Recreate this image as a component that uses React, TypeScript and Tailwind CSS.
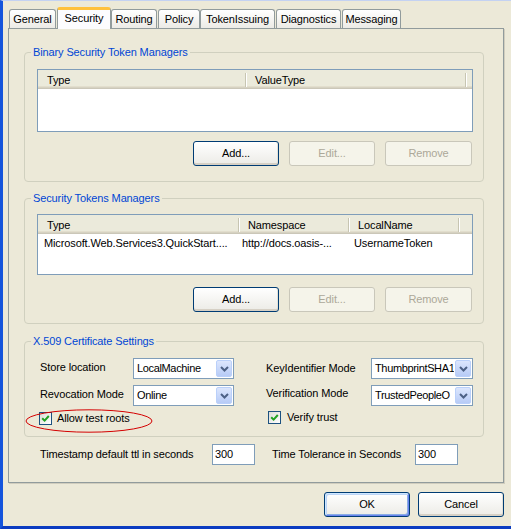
import React from "react";

function Chevron() {
  return (
    <svg width="9" height="6" viewBox="0 0 9 6">
      <polyline points="1,1 4.5,4.5 8,1" fill="none" stroke="#4D6185" strokeWidth="2" />
    </svg>
  );
}

function Select({ value, w }: { value: string; w: string }) {
  return (
    <div className={`${w} h-[21px] border border-[#7F9DB9] bg-white flex items-stretch`}>
      <div className="flex-1 min-w-0 pl-[3px] flex items-center overflow-hidden whitespace-nowrap tracking-[-0.35px]">{value}</div>
      <div className="w-[16px] shrink-0 m-px rounded-[2px] border border-[#BAD0FA] bg-linear-to-b from-[#DCE6FD] to-[#B7CBF6] flex items-center justify-center">
        <Chevron />
      </div>
    </div>
  );
}

function Checkbox() {
  return (
    <div className="w-[13px] h-[13px] border border-[#1C5180] bg-linear-to-br from-[#DCDCD7] to-white flex items-center justify-center">
      <svg width="9" height="9" viewBox="0 0 9 9">
        <path d="M1.2 4.2 L3.6 6.6 L7.8 2" fill="none" stroke="#21A121" strokeWidth="2" />
      </svg>
    </div>
  );
}

function Btn({ label, w, disabled, def }: { label: string; w: string; disabled?: boolean; def?: boolean }) {
  if (disabled) {
    return (
      <div className={`${w} h-[25px] rounded-[3px] border border-[#C9C7BA] bg-[#F5F4EA] text-[#ACA899] flex items-center justify-center`}>
        {label}
      </div>
    );
  }
  if (def) {
    return (
      <div className={`${w} h-[25px] rounded-[3px] border border-[#003C74] bg-linear-to-b from-white to-[#ECEBE6] flex items-center justify-center shadow-[inset_1px_1px_0_#CEE7FF,inset_-1px_-1px_0_#6982EE,inset_2px_2px_0_#BCD4F6,inset_-2px_-2px_0_#89ADE4]`}>
        {label}
      </div>
    );
  }
  return (
    <div className={`${w} h-[25px] rounded-[3px] border border-[#003C74] bg-linear-to-b from-white to-[#ECEBE6] flex items-center justify-center shadow-[inset_0_-2px_0_#D6D0C5,inset_-1px_0_0_#E3E1D6]`}>
      {label}
    </div>
  );
}

function HeaderCell({ label, w }: { label: string; w: string }) {
  return (
    <div className={`${w} h-full flex items-center justify-between pl-[9px] pt-[2px]`}>
      <span className="whitespace-nowrap">{label}</span>
      <span className="w-px h-[14px] -mt-[2px] bg-[#C7C5B2] shadow-[1px_0_0_#FFFFFF]" />
    </div>
  );
}

const headerCls =
  "h-[19px] flex bg-[#EBEADB] shadow-[inset_0_-1px_0_#CBC7B8,inset_0_-2px_0_#D6D2C2,inset_0_-3px_0_#E2DECD]";

function GroupTitle({ text }: { text: string }) {
  return (
    <div className="-mt-[7px] ml-[6px] px-[2px] w-fit bg-[#ECE9D8] text-[#0046D5] leading-[13px] whitespace-nowrap">
      {text}
    </div>
  );
}

function Tab({ label, w, ml, selected }: { label: string; w: string; ml: string; selected?: boolean }) {
  if (selected) {
    return (
      <div className={`${w} ${ml} h-[22px] -mb-px relative z-10 border-x border-[#919B9C] border-t-[3px] border-t-[#FFC13C] rounded-t-[3px] bg-[#FCFCFE] flex items-center justify-center pb-[2px]`}>
        {label}
      </div>
    );
  }
  return (
    <div className={`${w} ${ml} h-[19px] border border-b-0 border-[#919B9C] rounded-t-[3px] bg-linear-to-b from-white to-[#ECEBE6] flex items-center justify-center pt-[1px]`}>
      {label}
    </div>
  );
}

export default function App() {
  return (
    <div className="relative w-[511px] h-[529px] overflow-hidden bg-[#ECE9D8] border-t border-t-[#C4D2F2] border-l-[3px] border-l-[#1454DC] border-b-[3px] border-b-[#0B3CC1] font-['Liberation_Sans',Arial,sans-serif] text-[11px] leading-[13px] tracking-[-0.12px] text-black flex flex-col">
      {/* Tabs */}
      <div className="mt-[6px] h-[21px] flex items-end">
        <Tab label="General" w="w-[47px]" ml="ml-[6px]" />
        <Tab label="Security" w="w-[54px]" ml="ml-[1px]" selected />
        <Tab label="Routing" w="w-[46px]" ml="ml-0" />
        <Tab label="Policy" w="w-[42px]" ml="ml-[1px]" />
        <Tab label="TokenIssuing" w="w-[75px]" ml="ml-0" />
        <Tab label="Diagnostics" w="w-[65px]" ml="ml-[1px]" />
        <Tab label="Messaging" w="w-[59px]" ml="ml-[1px]" />
      </div>

      {/* Panel */}
      <div className="ml-[5px] w-[496px] h-[455px] border border-[#919B9C] shadow-[1px_1px_0_#D0CDBE] flex flex-col">
        {/* Group 1 */}
        <div className="ml-[15px] mt-[23px] w-[460px] border border-[#D0D0BF] rounded-[4px] pb-[15px]">
          <GroupTitle text="Binary Security Token Managers" />
          <div className="mt-[10px] ml-[12px] w-[436px] h-[63px] border border-[#7F9DB9] bg-white">
            <div className={headerCls}>
              <HeaderCell label="Type" w="w-[208px]" />
              <HeaderCell label="ValueType" w="w-[220px]" />
            </div>
          </div>
          <div className="mt-[9px] mr-[11px] flex justify-end gap-[10px]">
            <Btn label="Add..." w="w-[86px]" />
            <Btn label="Edit..." w="w-[86px]" disabled />
            <Btn label="Remove" w="w-[87px]" disabled />
          </div>
        </div>

        {/* Group 2 */}
        <div className="ml-[15px] mt-[16px] w-[460px] border border-[#D0D0BF] rounded-[4px] pb-[11px]">
          <GroupTitle text="Security Tokens Managers" />
          <div className="mt-[9px] ml-[12px] w-[436px] h-[61px] border border-[#7F9DB9] bg-white">
            <div className={headerCls}>
              <HeaderCell label="Type" w="w-[201px]" />
              <HeaderCell label="Namespace" w="w-[110px]" />
              <HeaderCell label="LocalName" w="w-[110px]" />
            </div>
            <div className="h-[18px] pt-[1px] flex items-center whitespace-nowrap">
              <div className="w-[201px] pl-[6px] overflow-hidden">Microsoft.Web.Services3.QuickStart....</div>
              <div className="w-[110px] pl-[3px] overflow-hidden">http://docs.oasis-...</div>
              <div className="w-[110px] pl-[5px] overflow-hidden">UsernameToken</div>
            </div>
          </div>
          <div className="mt-[12px] mr-[11px] flex justify-end gap-[10px]">
            <Btn label="Add..." w="w-[86px]" />
            <Btn label="Edit..." w="w-[86px]" disabled />
            <Btn label="Remove" w="w-[87px]" disabled />
          </div>
        </div>

        {/* Group 3 */}
        <div className="ml-[15px] mt-[17px] w-[460px] border border-[#D0D0BF] rounded-[4px] pb-[11px]">
          <GroupTitle text="X.509 Certificate Settings" />
          <div className="mt-[10px] pl-[15px] flex items-center">
            <div className="w-[93px] pb-[3px]">Store location</div>
            <Select value="LocalMachine" w="w-[101px]" />
            <div className="w-[32px]" />
            <div className="w-[105px] pb-[1px]">KeyIdentifier Mode</div>
            <Select value="ThumbprintSHA1" w="w-[102px]" />
          </div>
          <div className="mt-[6px] pl-[15px] flex items-center">
            <div className="w-[93px] pb-[2px]">Revocation Mode</div>
            <Select value="Online" w="w-[101px]" />
            <div className="w-[32px]" />
            <div className="w-[105px] pb-[4px]">Verification Mode</div>
            <Select value="TrustedPeopleO" w="w-[102px]" />
          </div>
          <div className="mt-[6px] pl-[14px] flex items-center">
            <div className="w-[229px] flex items-center gap-[5px]">
              <Checkbox />
              <span>Allow test roots</span>
            </div>
            <div className="flex items-center gap-[6px] -mt-[2px]">
              <Checkbox />
              <span>Verify trust</span>
            </div>
          </div>
        </div>

        {/* Timestamp row */}
        <div className="mt-[7px] pl-[31px] flex items-center">
          <div className="w-[172px]">Timestamp default ttl in seconds</div>
          <div className="w-[43px] h-[21px] border border-[#7F9DB9] bg-white pl-[2px] flex items-center">300</div>
          <div className="ml-[17px] w-[143px]">Time Tolerance in Seconds</div>
          <div className="w-[43px] h-[21px] border border-[#7F9DB9] bg-white pl-[2px] flex items-center">300</div>
        </div>
      </div>

      {/* Dialog buttons */}
      <div className="mt-[9px] mr-[7px] flex justify-end gap-[8px]">
        <Btn label="OK" w="w-[86px]" def />
        <Btn label="Cancel" w="w-[86px]" />
      </div>

      {/* Red annotation ellipse */}
      <svg className="absolute left-[22px] top-[408px]" width="128" height="24" viewBox="0 0 128 24">
        <ellipse cx="64" cy="12" rx="63" ry="11.2" fill="none" stroke="#D40000" strokeWidth="1" />
      </svg>
    </div>
  );
}
